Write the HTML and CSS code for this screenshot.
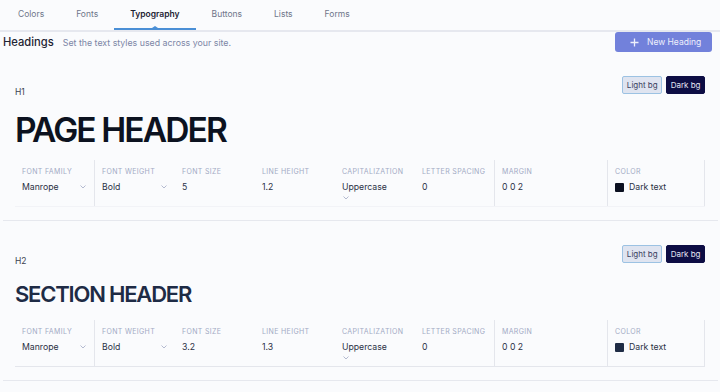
FILE: index.html
```html
<!DOCTYPE html>
<html lang="en">
<head>
    <meta charset="UTF-8">
    <meta name="viewport" content="width=device-width, initial-scale=1.0">
    <title>Typography</title>
    <link rel="stylesheet" href="styles.css">
</head>
<body>
    <nav class="tabs">
        <a class="tab">Colors</a>
        <a class="tab">Fonts</a>
        <a class="tab active">Typography</a>
        <a class="tab">Buttons</a>
        <a class="tab">Lists</a>
        <a class="tab">Forms</a>
    </nav>

    <div class="page-head">
        <div class="page-title">
            <h2>Headings</h2>
            <p>Set the text styles used across your site.</p>
        </div>
        <button class="btn-primary">
            <svg width="9" height="9" viewBox="0 0 9 9"><path d="M4.5 0.5v8M0.5 4.5h8" stroke="currentColor" stroke-width="1.3"/></svg>
            New Heading
        </button>
    </div>

    <!-- H1 -->
    <section class="style-block">
        <div class="block-top">
            <span class="tag">H1</span>
            <div class="bg-toggle">
                <button class="bg-light">Light bg</button>
                <button class="bg-dark">Dark bg</button>
            </div>
        </div>
        <div class="preview preview-h1">PAGE HEADER</div>
        <div class="props faint">
            <div class="cell divider">
                <span class="label">Font family</span>
                <div class="select"><span>Manrope</span><svg class="chev" viewBox="0 0 6 4"><path d="M0.5 0.5l2.5 2.5 2.5-2.5"/></svg></div>
            </div>
            <div class="cell">
                <span class="label">Font weight</span>
                <div class="select"><span>Bold</span><svg class="chev" viewBox="0 0 6 4"><path d="M0.5 0.5l2.5 2.5 2.5-2.5"/></svg></div>
            </div>
            <div class="cell">
                <span class="label">Font size</span>
                <div class="select"><span>5</span></div>
            </div>
            <div class="cell">
                <span class="label">Line height</span>
                <div class="select"><span>1.2</span></div>
            </div>
            <div class="cell">
                <span class="label">Capitalization</span>
                <div class="select stacked"><span>Uppercase</span><svg class="chev" viewBox="0 0 6 4"><path d="M0.5 0.5l2.5 2.5 2.5-2.5"/></svg></div>
            </div>
            <div class="cell divider">
                <span class="label">Letter spacing</span>
                <div class="select"><span>0</span></div>
            </div>
            <div class="cell divider">
                <span class="label">Margin</span>
                <div class="select"><span>0 0 2</span></div>
            </div>
            <div class="cell divider">
                <span class="label">Color</span>
                <div class="select"><span class="swatch swatch-black"></span><span class="grow">Dark text</span></div>
            </div>
        </div>
    </section>

    <!-- H2 -->
    <section class="style-block">
        <div class="block-top">
            <span class="tag">H2</span>
            <div class="bg-toggle">
                <button class="bg-light">Light bg</button>
                <button class="bg-dark">Dark bg</button>
            </div>
        </div>
        <div class="preview preview-h2">SECTION HEADER</div>
        <div class="props">
            <div class="cell divider">
                <span class="label">Font family</span>
                <div class="select"><span>Manrope</span><svg class="chev" viewBox="0 0 6 4"><path d="M0.5 0.5l2.5 2.5 2.5-2.5"/></svg></div>
            </div>
            <div class="cell">
                <span class="label">Font weight</span>
                <div class="select"><span>Bold</span><svg class="chev" viewBox="0 0 6 4"><path d="M0.5 0.5l2.5 2.5 2.5-2.5"/></svg></div>
            </div>
            <div class="cell">
                <span class="label">Font size</span>
                <div class="select"><span>3.2</span></div>
            </div>
            <div class="cell">
                <span class="label">Line height</span>
                <div class="select"><span>1.3</span></div>
            </div>
            <div class="cell">
                <span class="label">Capitalization</span>
                <div class="select stacked"><span>Uppercase</span><svg class="chev" viewBox="0 0 6 4"><path d="M0.5 0.5l2.5 2.5 2.5-2.5"/></svg></div>
            </div>
            <div class="cell divider">
                <span class="label">Letter spacing</span>
                <div class="select"><span>0</span></div>
            </div>
            <div class="cell divider">
                <span class="label">Margin</span>
                <div class="select"><span>0 0 2</span></div>
            </div>
            <div class="cell divider">
                <span class="label">Color</span>
                <div class="select"><span class="swatch swatch-navy"></span><span class="grow">Dark text</span></div>
            </div>
        </div>
    </section>
</body>
</html>
```

FILE: styles.css
```css
body {
    margin: 0;
    font-family: Inter, "Noto Sans", sans-serif;
    background-color: #fafbfd;
    color: #2b3145;
}
.tabs {
    display: flex;
    padding-left: 2px;
    border-bottom: 2px solid #e6e8ef;
}
.tab {
    position: relative;
    height: 30px;
    line-height: 28px;
    padding: 0 16px;
    font-size: 8.5px;
    color: #6f768a;
}
.tab.active {
    color: #1d2233;
    font-weight: 600;
}
.tab.active::after {
    content: "";
    position: absolute;
    left: 0;
    right: 0;
    bottom: 0;
    height: 2px;
    background-color: #4a8fd6;
}
.tab.active::before {
    content: "";
    position: absolute;
    left: 50%;
    bottom: 2px;
    margin-left: -3px;
    border-left: 3px solid transparent;
    border-right: 3px solid transparent;
    border-bottom: 2px solid #4a8fd6;
}
.page-head {
    display: flex;
    justify-content: space-between;
    align-items: center;
    padding: 0 8px 0 3px;
}
.page-title {
    display: flex;
    align-items: baseline;
    gap: 9px;
}
.page-title h2 {
    margin: 0;
    font-size: 11.2px;
    font-weight: 500;
    color: #1f2433;
}
.page-title p {
    margin: 0;
    font-size: 8.8px;
    color: #7c86a6;
}
.btn-primary {
    display: flex;
    align-items: center;
    gap: 8px;
    height: 20px;
    width: 97px;
    padding: 0 0 0 15px;
    border: none;
    border-radius: 3px;
    background-color: #7281db;
    color: #eef0fb;
    font-family: inherit;
    font-size: 8.5px;
}
.style-block {
    margin: 0 2px 0 3px;
    padding: 24px 13px 13px 12px;
    border-bottom: 1px solid #e6e8ee;
}
.block-top {
    display: flex;
    justify-content: space-between;
    align-items: flex-end;
}
.tag {
    font-size: 8.5px;
    color: #3a3f50;
    line-height: 11px;
    margin-bottom: -4px;
}
.bg-toggle {
    display: flex;
    gap: 4px;
}
.bg-toggle button {
    height: 18px;
    padding: 0 3.5px;
    border-radius: 2px;
    font-family: inherit;
    font-size: 8px;
}
.bg-light {
    background-color: #dfe4f0;
    border: 1px solid #9cc2e3;
    color: #3a4160;
}
.bg-dark {
    background-color: #0d0d44;
    border: 1px solid #0d0d44;
    color: #e4e5f3;
}
.preview {
    margin-top: 16px;
    font-weight: 600;
    text-transform: uppercase;
}
.preview-h1 {
    font-size: 33.5px;
    line-height: 40px;
    letter-spacing: -1.9px;
    color: #0c1220;
}
.preview-h2 {
    font-size: 22px;
    line-height: 31px;
    letter-spacing: -1.2px;
    color: #1e2b45;
}
.props {
    display: grid;
    grid-template-columns: repeat(6, 80px) 113px 97px;
    margin-top: 10px;
    height: 46px;
    border-bottom: 1px solid #e4e6ec;
}
.props.faint {
    border-bottom-color: #f2f3f7;
}
.cell {
    padding: 6px 8px 0 7px;
}
.cell.divider {
    border-right: 1px solid #e4e6ec;
}
.label {
    display: block;
    white-space: nowrap;
    font-size: 7px;
    line-height: 12px;
    letter-spacing: 0.35px;
    text-transform: uppercase;
    color: #a2aac4;
}
.select {
    display: flex;
    justify-content: space-between;
    align-items: center;
    margin-top: 3px;
    font-size: 8.7px;
    line-height: 12px;
    color: #2b3145;
}
.select.stacked {
    flex-direction: column;
    align-items: flex-start;
}
.chev {
    width: 6px;
    height: 4px;
    fill: none;
    stroke: #a2aac4;
    stroke-width: 0.8;
}
.stacked .chev {
    margin: 3px 0 0 1px;
}
.swatch {
    width: 9px;
    height: 9px;
    border-radius: 1px;
    margin-right: 5px;
}
.swatch-black {
    background-color: #0b1020;
}
.swatch-navy {
    background-color: #1f2c45;
}
.grow {
    flex: 1;
}
```
